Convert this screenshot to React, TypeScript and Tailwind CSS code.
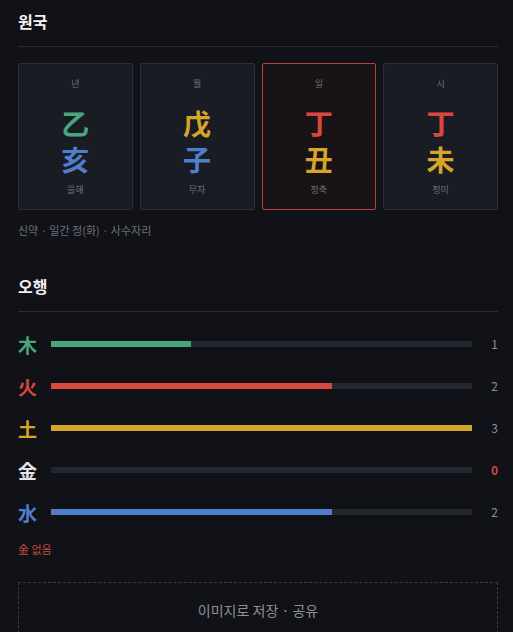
import React from "react"

const KR = "font-['Noto_Sans_CJK_KR','Noto_Sans',sans-serif]"

type Pillar = {
  label: string
  stem: string
  stemColor: string
  branch: string
  branchColor: string
  reading: string
  active?: boolean
}

const pillars: Pillar[] = [
  { label: "년", stem: "乙", stemColor: "text-[#4ba67e]", branch: "亥", branchColor: "text-[#4f7fcb]", reading: "을해" },
  { label: "월", stem: "戊", stemColor: "text-[#d6a62b]", branch: "子", branchColor: "text-[#4f7fcb]", reading: "무자" },
  { label: "일", stem: "丁", stemColor: "text-[#d9473e]", branch: "丑", branchColor: "text-[#d6a62b]", reading: "정축", active: true },
  { label: "시", stem: "丁", stemColor: "text-[#d9473e]", branch: "未", branchColor: "text-[#d6a62b]", reading: "정미" },
]

const elements = [
  { ch: "木", color: "text-[#4ba67e]", bar: "bg-[#4ba67e]", count: 1 },
  { ch: "火", color: "text-[#d9473e]", bar: "bg-[#d9473e]", count: 2 },
  { ch: "土", color: "text-[#d6a62b]", bar: "bg-[#d6a62b]", count: 3 },
  { ch: "金", color: "text-[#e4e4e8]", bar: "bg-[#c9c9cf]", count: 0 },
  { ch: "水", color: "text-[#4f7fcb]", bar: "bg-[#4f7fcb]", count: 2 },
]

export default function App() {
  const max = 3
  return (
    <div className={`min-h-screen bg-[#111217] pl-[18px] pr-[15px] ${KR}`}>
      {/* 원국 */}
      <h2 className="pt-[10px] text-[16px] font-bold leading-[22px] text-[#f1f1f3]">원국</h2>
      <div className="mt-[14px] h-px bg-[#2a2c33]" />

      <div className="mt-[16px] grid grid-cols-4 gap-[7px]">
        {pillars.map((p) => (
          <div
            key={p.label}
            className={`flex flex-col items-center rounded-[2px] border pt-[13px] pb-[12px] ${
              p.active ? "border-[#b6433b] bg-[#1a1315]" : "border-[#2d2f38] bg-[#1a1c23]"
            }`}
          >
            <span className="text-[9px] leading-[14px] text-[#6e717a]">{p.label}</span>
            <span className={`mt-[15px] text-[28px] font-bold leading-[34px] ${p.stemColor}`}>{p.stem}</span>
            <span className={`mt-[2px] text-[28px] font-bold leading-[34px] ${p.branchColor}`}>{p.branch}</span>
            <span className="mt-[7px] text-[9px] leading-[14px] text-[#6e717a]">{p.reading}</span>
          </div>
        ))}
      </div>

      <p className="mt-[12px] text-[11px] leading-[16px] text-[#6e717a]">신약 · 일간 정(화) · 사수자리</p>

      {/* 오행 */}
      <h2 className="mt-[37px] text-[16px] font-bold leading-[22px] text-[#f1f1f3]">오행</h2>
      <div className="mt-[14px] h-px bg-[#2a2c33]" />

      <div className="mt-[11px] flex flex-col">
        {elements.map((e) => (
          <div key={e.ch} className="flex h-[42px] items-center">
            <span className={`w-[20px] text-[19px] font-bold leading-none ${e.color}`}>{e.ch}</span>
            <div className="ml-[13px] h-[6px] flex-1 bg-[#23252f]">
              <div className={`h-full ${e.bar}`} style={{ width: `${(e.count / max) * 100}%` }} />
            </div>
            <span
              className={`w-[26px] text-right text-[12px] ${
                e.count === 0 ? "font-bold text-[#c9463d]" : "text-[#8e9099]"
              }`}
            >
              {e.count}
            </span>
          </div>
        ))}
      </div>

      <p className="mt-[8px] text-[11px] leading-[16px] text-[#c9463d]">金 없음</p>

      <div className="mt-[25px] flex h-[56px] items-center justify-center border border-dashed border-[#3a3c44]">
        <span className="text-[14px] text-[#8e9099]">이미지로 저장 · 공유</span>
      </div>
      <div className="h-[20px]" />
    </div>
  )
}
